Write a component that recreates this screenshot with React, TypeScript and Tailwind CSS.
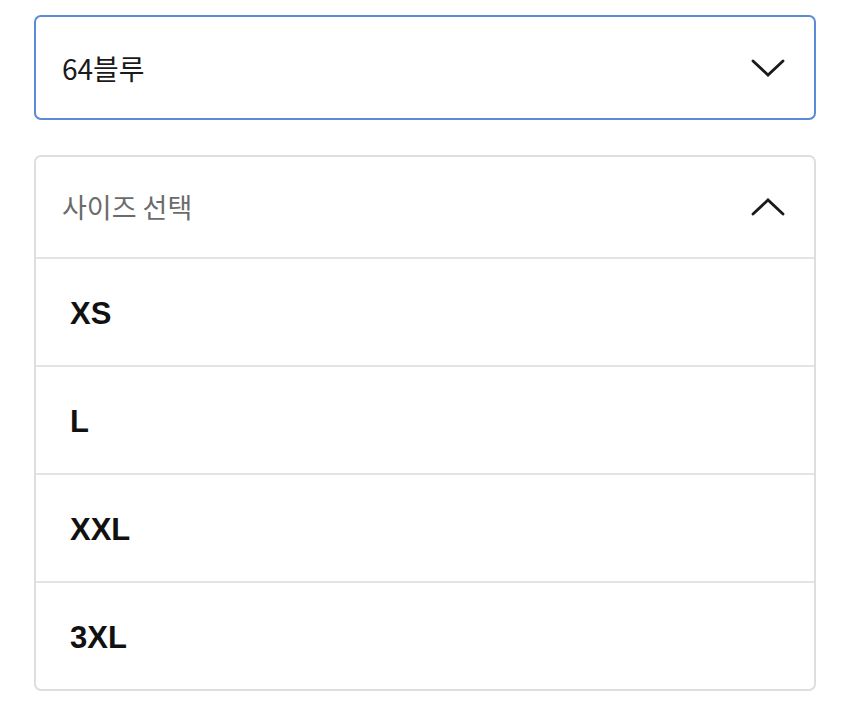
import React from 'react';

const sizes = ['XS', 'L', 'XXL', '3XL'];

const Chevron: React.FC<{ up?: boolean }> = ({ up }) => (
  <svg width="34" height="20" viewBox="0 0 34 20" fill="none" className="shrink-0">
    <polyline
      points={up ? '2,17 17,3 32,17' : '2,3 17,17 32,3'}
      stroke="#1a1a1a"
      strokeWidth="2.8"
      strokeLinecap="round"
      strokeLinejoin="miter"
    />
  </svg>
);

const App: React.FC = () => {
  return (
    <div className="min-h-[712px] bg-white px-[34px] pt-[15px] font-['Noto_Sans_CJK_KR',sans-serif]">
      {/* selected colour */}
      <div className="flex h-[105px] items-center justify-between rounded-[7px] border-2 border-[#5b8ad6] pl-[26px] pr-[29px]">
        <span className="text-[28px] text-[#1a1a1a]">64블루</span>
        <Chevron />
      </div>

      {/* size list */}
      <div className="mt-[35px] overflow-hidden rounded-[7px] border-2 border-[#dedede]">
        <div className="flex h-[100px] items-center justify-between pl-[26px] pr-[29px]">
          <span className="text-[27px] text-[#6b6b6b]">사이즈 선택</span>
          <Chevron up />
        </div>
        {sizes.map((s) => (
          <div
            key={s}
            className="flex h-[108px] items-center border-t-2 border-[#e4e4e4] pl-[34px] pt-[4px] font-['Liberation_Sans',Arial,sans-serif] text-[31px] font-bold text-[#111]"
          >
            {s}
          </div>
        ))}
      </div>
    </div>
  );
};

export default App;
